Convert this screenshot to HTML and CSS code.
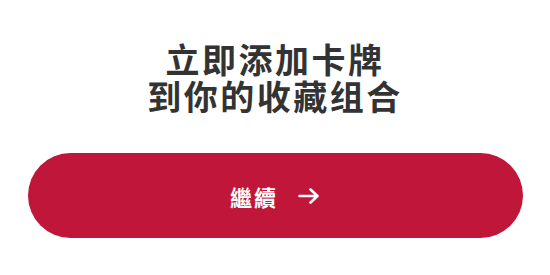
FILE: index.html
```html
<!DOCTYPE html>
<html lang="zh">
<head>
<meta charset="utf-8">
<link rel="stylesheet" href="styles.css">
</head>
<body>
<main class="screen">
  <h1 class="title"><span class="title-line">立即添加卡牌</span><span class="title-line">到你的收藏组合</span></h1>
  <button class="cta" type="button">
    <span class="cta-label">繼續</span>
    <svg class="cta-arrow" width="22" height="16" viewBox="0 0 22 16" aria-hidden="true">
      <path d="M1.5 8 H19.5 M12.5 1.5 L19.5 8 L12.5 14.5" fill="none" stroke="#fff" stroke-width="2.6" stroke-linecap="round" stroke-linejoin="round"/>
    </svg>
  </button>
</main>
</body>
</html>
```

FILE: styles.css
```css
html, body {
  margin: 0;
  padding: 0;
  background: #ffffff;
}
.screen {
  width: 550px;
  height: 275px;
  display: flex;
  flex-direction: column;
  align-items: center;
  padding-top: 40px;
  box-sizing: border-box;
  font-family: "Noto Sans CJK SC", "Noto Sans CJK TC", "Noto Sans", sans-serif;
}
.title {
  margin: 0;
  display: flex;
  flex-direction: column;
  align-items: center;
  font-size: 34px;
  font-weight: 700;
  letter-spacing: 2.5px;
  color: #333333;
  text-align: center;
}
.title-line {
  display: block;
  height: 37px;
  line-height: 37px;
}
.cta {
  margin-top: 39px;
  width: 495px;
  height: 85px;
  border: none;
  border-radius: 43px;
  background: #c0163a;
  color: #ffffff;
  display: flex;
  align-items: center;
  justify-content: center;
  gap: 20px;
  padding: 0;
  font-family: inherit;
}
.cta-label {
  font-size: 22px;
  font-weight: 700;
  letter-spacing: 2px;
  line-height: 1;
}
.cta-arrow {
  display: block;
}
```
